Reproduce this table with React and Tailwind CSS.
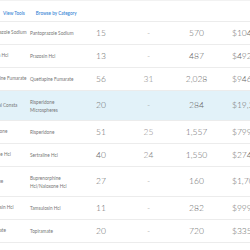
const ROWS = [
  { brand: 'Pantoprazole Sodium', generic: 'Pantoprazole Sodium', a: '15', b: '-', c: '570', price: '$104,521', h: 'h-[23px]' },
  { brand: 'Prazosin Hcl', generic: 'Prazosin Hcl', a: '13', b: '-', c: '487', price: '$492,370', h: 'h-[23px]' },
  { brand: 'Quetiapine Fumarate', generic: 'Quetiapine Fumarate', a: '56', b: '31', c: '2,028', price: '$946,118', h: 'h-[23px]' },
  { brand: 'Risperdal Consta', generic: 'Risperidone Microspheres', a: '20', b: '-', c: '284', price: '$19,223,004', h: 'h-[30px]', hl: true },
  { brand: 'Risperidone', generic: 'Risperidone', a: '51', b: '25', c: '1,557', price: '$799,905', h: 'h-[23px]' },
  { brand: 'Sertraline Hcl', generic: 'Sertraline Hcl', a: '40', b: '24', c: '1,550', price: '$274,118', h: 'h-[23px]' },
  { brand: 'Suboxone', generic: 'Buprenorphine Hcl/Naloxone Hcl', a: '27', b: '-', c: '160', price: '$1,709,442', h: 'h-[30px]' },
  { brand: 'Tamsulosin Hcl', generic: 'Tamsulosin Hcl', a: '11', b: '-', c: '282', price: '$999,563', h: 'h-[23px]' },
  { brand: 'Topiramate', generic: 'Topiramate', a: '20', b: '-', c: '720', price: '$335,180', h: 'h-[23px]' },
  { brand: 'Trazodone Hcl', generic: 'Trazodone Hcl', a: '14', b: '12', c: '1,224', price: '$1,104,37', h: 'h-[23px]' },
]

const grid = 'grid grid-cols-[47px_48px_46px_49px_47px_80px]'

export default function App() {
  return (
    <div className="w-[250px] h-[250px] overflow-hidden bg-white" style={{ fontFamily: 'Lato, "Liberation Sans", sans-serif' }}>
      <div className="ml-[-17px] w-[320px]">
        {/* header links */}
        <div className="h-[21px] flex items-center pt-[5px] border-t border-[#f2f2f2] text-[4.6px] font-semibold text-[#3d87d6]">
          <span className="ml-[20px]">View Tools</span>
          <span className="ml-[11px]">Browse by Category</span>
        </div>

        {ROWS.map((r, i) => (
          <div key={i} className={`${grid} ${r.h} items-center border-t border-[#ececec] ${r.hl ? 'bg-[#e2f2f9]' : ''}`}>
            <div className="text-[4.7px] text-[#777] whitespace-nowrap">{r.brand}</div>
            <div className="text-[4.7px] leading-[8px] text-[#777] pr-[1px]">{r.generic}</div>
            <div className="text-center text-[8.5px] font-light text-[#666]">{r.a}</div>
            <div className="text-center text-[8.5px] font-light text-[#888]">{r.b}</div>
            <div className="text-center text-[8.5px] font-light text-[#666]">{r.c}</div>
            <div className="pl-[12px] text-[8.5px] font-light text-[#666] whitespace-nowrap">{r.price}</div>
          </div>
        ))}
      </div>
    </div>
  )
}
